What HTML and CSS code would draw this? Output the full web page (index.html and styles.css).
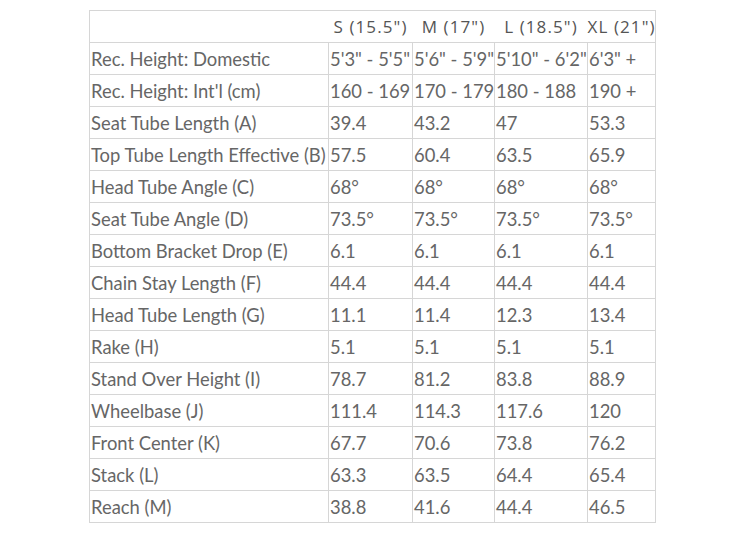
FILE: index.html
```html
<!DOCTYPE html>
<html>
<head>
<meta charset="utf-8">
<link rel="stylesheet" href="styles.css">
</head>
<body>
<div class="wrap">
<table class="geo">
<colgroup>
<col class="c0"><col class="c1"><col class="c2"><col class="c3"><col class="c4">
</colgroup>
<thead>
<tr><th></th><th>S (15.5")</th><th>M (17")</th><th>L (18.5")</th><th>XL (21")</th></tr>
</thead>
<tbody>
<tr><td>Rec. Height: Domestic</td><td>5'3" - 5'5"</td><td>5'6" - 5'9"</td><td>5'10" - 6'2"</td><td>6'3" +</td></tr>
<tr><td>Rec. Height: Int'l (cm)</td><td>160 - 169</td><td>170 - 179</td><td>180 - 188</td><td>190 +</td></tr>
<tr><td>Seat Tube Length (A)</td><td>39.4</td><td>43.2</td><td>47</td><td>53.3</td></tr>
<tr><td>Top Tube Length Effective (B)</td><td>57.5</td><td>60.4</td><td>63.5</td><td>65.9</td></tr>
<tr><td>Head Tube Angle (C)</td><td>68°</td><td>68°</td><td>68°</td><td>68°</td></tr>
<tr><td>Seat Tube Angle (D)</td><td>73.5°</td><td>73.5°</td><td>73.5°</td><td>73.5°</td></tr>
<tr><td>Bottom Bracket Drop (E)</td><td>6.1</td><td>6.1</td><td>6.1</td><td>6.1</td></tr>
<tr><td>Chain Stay Length (F)</td><td>44.4</td><td>44.4</td><td>44.4</td><td>44.4</td></tr>
<tr><td>Head Tube Length (G)</td><td>11.1</td><td>11.4</td><td>12.3</td><td>13.4</td></tr>
<tr><td>Rake (H)</td><td>5.1</td><td>5.1</td><td>5.1</td><td>5.1</td></tr>
<tr><td>Stand Over Height (I)</td><td>78.7</td><td>81.2</td><td>83.8</td><td>88.9</td></tr>
<tr><td>Wheelbase (J)</td><td>111.4</td><td>114.3</td><td>117.6</td><td>120</td></tr>
<tr><td>Front Center (K)</td><td>67.7</td><td>70.6</td><td>73.8</td><td>76.2</td></tr>
<tr><td>Stack (L)</td><td>63.3</td><td>63.5</td><td>64.4</td><td>65.4</td></tr>
<tr><td>Reach (M)</td><td>38.8</td><td>41.6</td><td>44.4</td><td>46.5</td></tr>
</tbody>
</table>
</div>
</body>
</html>
```
FILE: styles.css
```css
html, body {
  margin: 0;
  padding: 0;
  background: #ffffff;
}
.wrap {
  padding: 10px 0 0 89px;
}
.geo {
  border-collapse: collapse;
  table-layout: fixed;
  width: 567px;
  border: 1px solid #d6d6d6;
  font-family: Lato, "Liberation Sans", sans-serif;
  color: #666666;
}
.c0 { width: 239px; }
.c1 { width: 84px; }
.c2 { width: 82px; }
.c3 { width: 93px; }
.c4 { width: 68px; }
.geo th {
  font-family: "Open Sans", "Liberation Sans", sans-serif;
  font-weight: normal;
  font-size: 17px;
  letter-spacing: 1.1px;
  color: #555555;
  height: 31px;
  padding: 0;
  text-align: center;
  white-space: nowrap;
  border-bottom: 1px solid #d6d6d6;
}
.geo td {
  font-size: 18.4px;
  height: 31px;
  padding: 0 0 0 1px;
  white-space: nowrap;
  border: 1px solid #d6d6d6;
}
```
